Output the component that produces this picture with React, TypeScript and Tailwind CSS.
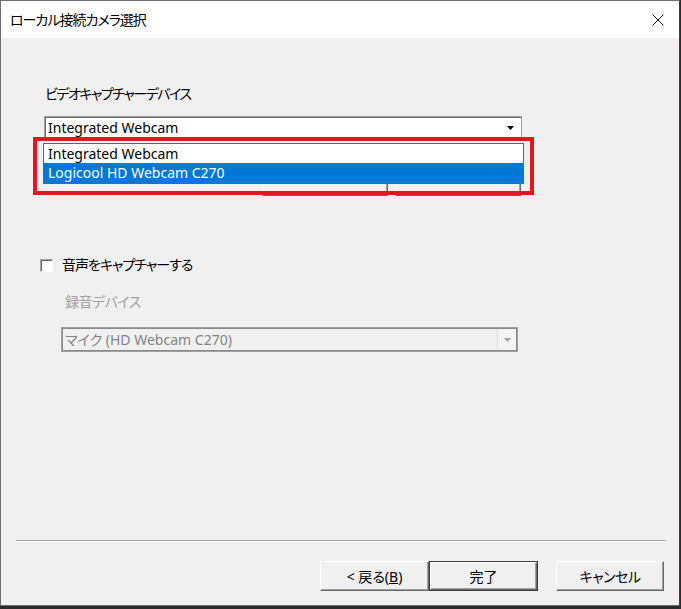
// @ts-nocheck
import React from 'react';

const FONT = { fontFamily: '"Segoe UI", "Noto Sans", "Noto Sans CJK JP", sans-serif', fontFeatureSettings: '"palt"' };

function Arrow({ color = '#000' }: { color?: string }) {
  return (
    <svg width="7" height="4" viewBox="0 0 7 4">
      <path d="M0 0H7L3.5 4Z" fill={color} />
    </svg>
  );
}

function WinButton({ children, isDefault = false, w }: { children: React.ReactNode; isDefault?: boolean; w: string }) {
  return (
    <div className={`${w} h-[30px] ${isDefault ? 'border border-[#3c3c3c]' : ''}`}>
      <div className="w-full h-full bg-[#f0f0f0] border border-t-white border-l-white border-r-[#696969] border-b-[#696969] shadow-[inset_-1px_-1px_0_#a0a0a0] flex items-center justify-center text-[14px] text-black">
        {children}
      </div>
    </div>
  );
}

export default function App() {
  return (
    <div className="relative w-[681px] h-[609px] bg-[#2b2b2b] overflow-hidden" style={FONT}>
      <div className="w-[680px] h-[606px] border border-[#6e6e6e] border-r-[#2f3d55] flex flex-col bg-[#f0f0f0]">
        {/* title bar */}
        <div className="h-[37px] bg-white flex items-center justify-between pl-[9px] pr-[15px]">
          <span className="text-[14px] text-black leading-none tracking-[-1px]">ローカル接続カメラ選択</span>
          <svg width="12" height="12" viewBox="0 0 12 12">
            <path d="M0.5 0.5L11.5 11.5M11.5 0.5L0.5 11.5" stroke="#111" strokeWidth="1" />
          </svg>
        </div>

        {/* body */}
        <div className="flex flex-col flex-1">
          <div className="mt-[46px] ml-[44px] h-[20px] leading-[20px] text-[14px] text-black tracking-[-1.5px]">ビデオキャプチャーデバイス</div>

          <div className="mt-[12px] ml-[43px] w-[478px] h-[24px] bg-white border border-[#a0a0a0] shadow-[inset_1px_1px_0_#6f6f6f] flex items-center justify-between pl-[3px] pr-[7px]">
            <span className="text-[14px] text-black leading-none">Integrated Webcam</span>
            <Arrow />
          </div>

          {/* buttons hidden under the open list */}
          <div className="mt-[30px] ml-[261px] flex gap-[7px]">
            <div className="w-[126px] h-[26px] bg-[#f0f0f0] border border-t-white border-l-white border-r-[#696969] border-b-[#696969] shadow-[inset_-1px_-1px_0_#a0a0a0]" />
            <div className="w-[126px] h-[26px] bg-[#f0f0f0] border border-t-white border-l-white border-r-[#696969] border-b-[#696969] shadow-[inset_-1px_-1px_0_#a0a0a0]" />
          </div>

          <div className="mt-[59px] ml-[39px] h-[20px] flex items-center gap-[9px]">
            <div className="w-[13px] h-[13px] bg-white border border-t-[#a0a0a0] border-l-[#a0a0a0] border-r-white border-b-white shadow-[inset_1px_1px_0_#696969]" />
            <span className="text-[14px] text-black leading-none tracking-[-1px]">音声をキャプチャーする</span>
          </div>

          <div className="mt-[17px] ml-[64px] h-[20px] leading-[20px] text-[14px] text-[#a0a0a0] tracking-[-0.5px]">録音デバイス</div>

          <div className="mt-[15px] ml-[60px] w-[457px] h-[25px] bg-[#f0f0f0] border border-[#a0a0a0] shadow-[inset_1px_1px_0_#8a8a8a,inset_-1px_-1px_0_#8a8a8a] flex items-center justify-between pl-[3px] pr-[1px]">
            <span className="text-[14px] text-[#838383] leading-none">マイク (HD Webcam C270)</span>
            <div className="w-[19px] h-[21px] bg-[#f4f4f4] border-l border-[#e0e0e0] flex items-center justify-center">
              <Arrow color="#a0a0a0" />
            </div>
          </div>

          <div className="mt-[188px] ml-[15px] w-[650px] border-t border-t-[#a0a0a0] border-b border-b-white" />

          <div className="mt-[19px] ml-[319px] flex items-center">
            <WinButton w="w-[109px]">&lt; 戻る(<span className="underline">B</span>)</WinButton>
            <WinButton w="w-[109px]" isDefault>完了</WinButton>
            <div className="w-[18px]" />
            <WinButton w="w-[108px]"><span className="tracking-[-0.5px]">キャンセル</span></WinButton>
          </div>
        </div>
      </div>

      {/* open dropdown list */}
      <div className="absolute left-[43px] top-[143px] w-[481px] h-[41px] border border-[#646464] bg-white flex flex-col">
        <div className="h-[19px] flex items-center pl-[4px] text-[14px] text-black leading-none">Integrated Webcam</div>
        <div className="h-[20px] flex items-center pl-[4px] text-[14px] text-white leading-none bg-[#0078d7]">Logicool HD Webcam C270</div>
      </div>

      {/* red highlight */}
      <div className="absolute left-[33px] top-[137px] w-[501px] h-[58px] border-[4px] border-[#e3161e]" />
    </div>
  );
}
